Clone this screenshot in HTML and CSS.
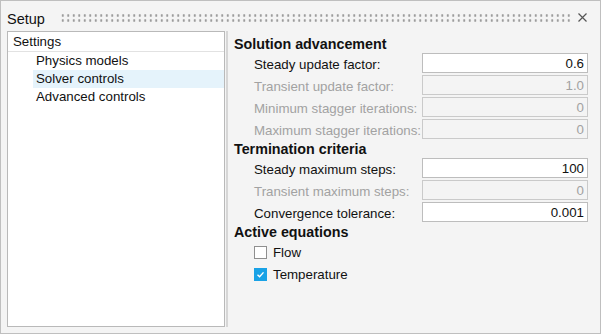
FILE: index.html
```html
<!DOCTYPE html>
<html>
<head>
  <title>Setup</title>
  <link rel="stylesheet" href="styles.css">
</head>
<body>
  <div class="window">
    <div class="titlebar">
      <span class="title">Setup</span>
      <div class="grip"></div>
      <svg class="close" width="9" height="9" viewBox="0 0 9 9">
        <path d="M0.5 0.5 L8.5 8.5 M8.5 0.5 L0.5 8.5" stroke="#555" stroke-width="1.2" fill="none"/>
      </svg>
    </div>

    <div class="main">
      <div class="tree">
        <div class="tree-header">Settings</div>
        <div class="tree-item">Physics models</div>
        <div class="tree-item selected">Solver controls</div>
        <div class="tree-item">Advanced controls</div>
      </div>
      <div class="splitter"></div>

      <div class="panel">
        <div class="section">Solution advancement</div>
        <div class="row">
          <label class="label">Steady update factor:</label>
          <input class="field" type="text" value="0.6">
        </div>
        <div class="row">
          <label class="label disabled">Transient update factor:</label>
          <input class="field" type="text" value="1.0" disabled>
        </div>
        <div class="row">
          <label class="label disabled">Minimum stagger iterations:</label>
          <input class="field" type="text" value="0" disabled>
        </div>
        <div class="row">
          <label class="label disabled">Maximum stagger iterations:</label>
          <input class="field" type="text" value="0" disabled>
        </div>

        <div class="section">Termination criteria</div>
        <div class="row">
          <label class="label">Steady maximum steps:</label>
          <input class="field" type="text" value="100">
        </div>
        <div class="row">
          <label class="label disabled">Transient maximum steps:</label>
          <input class="field" type="text" value="0" disabled>
        </div>
        <div class="row">
          <label class="label">Convergence tolerance:</label>
          <input class="field" type="text" value="0.001">
        </div>

        <div class="section">Active equations</div>
        <div class="check-row">
          <span class="box"></span>
          <span>Flow</span>
        </div>
        <div class="check-row">
          <span class="box checked">
            <svg width="13" height="13" viewBox="0 0 13 13">
              <path d="M3.5 6.8 L5.6 8.8 L9.5 4.4" stroke="#fff" stroke-width="1.4" fill="none"/>
            </svg>
          </span>
          <span>Temperature</span>
        </div>
      </div>
    </div>
  </div>
</body>
</html>
```

FILE: styles.css
```css
* {
  box-sizing: border-box;
}
body {
  margin: 0;
  font-family: "Liberation Sans", Arial, sans-serif;
  font-size: 13.3px;
  color: #111;
}
.window {
  width: 601px;
  height: 334px;
  border: 1px solid #bfbfbf;
  background-color: #f4f4f4;
  display: flex;
  flex-direction: column;
}
.titlebar {
  height: 30px;
  padding: 6px 13px 0 6px;
  display: flex;
  align-items: center;
}
.title {
  font-size: 14.5px;
}
.grip {
  flex: 1;
  height: 10px;
  margin: 0 6px 3px 15px;
  background-image: radial-gradient(circle, #9c9c9c 1px, transparent 1.4px);
  background-size: 5.5px 5px;
}
.close {
  margin-bottom: 3px;
}
.main {
  flex: 1;
  display: flex;
  padding: 0 0 6px 6px;
}
.tree {
  width: 218px;
  border: 1px solid #b9b9b9;
  background-color: #fff;
}
.tree-header {
  height: 20px;
  line-height: 19px;
  padding-left: 5px;
  border-bottom: 1px solid #e2e2e2;
}
.tree-item {
  height: 18px;
  line-height: 18px;
  margin-left: 25px;
  padding-left: 3px;
}
.tree-item.selected {
  background-color: #e5f3fb;
}
.splitter {
  width: 2px;
  margin-left: 1px;
  background-color: #d6d6d6;
}
.panel {
  flex: 1;
  padding: 5px 0 0 6px;
}
.section {
  font-size: 14.3px;
  font-weight: bold;
  height: 17px;
  line-height: 17px;
}
.row {
  display: flex;
  align-items: center;
  height: 22px;
  padding-left: 20px;
}
.label {
  width: 168px;
  white-space: nowrap;
}
.label.disabled {
  color: #a2a2a2;
}
.field {
  width: 166px;
  height: 20px;
  margin: 0 0 2px 0;
  padding: 0 3px;
  border: 1px solid #bdbdbd;
  background-color: #fff;
  font-family: inherit;
  font-size: 13.3px;
  color: #111;
  text-align: right;
  outline: none;
}
.field:disabled {
  background-color: #f4f4f4;
  border-color: #cacaca;
  color: #a2a2a2;
}
.check-row {
  display: flex;
  align-items: center;
  height: 22px;
  padding-left: 20px;
}
.box {
  width: 13px;
  height: 13px;
  margin-right: 6px;
  border: 1px solid #8f8f8f;
  background-color: #fff;
}
.box.checked {
  border: none;
  background-color: #19a2e6;
}
.box svg {
  display: block;
}
```
